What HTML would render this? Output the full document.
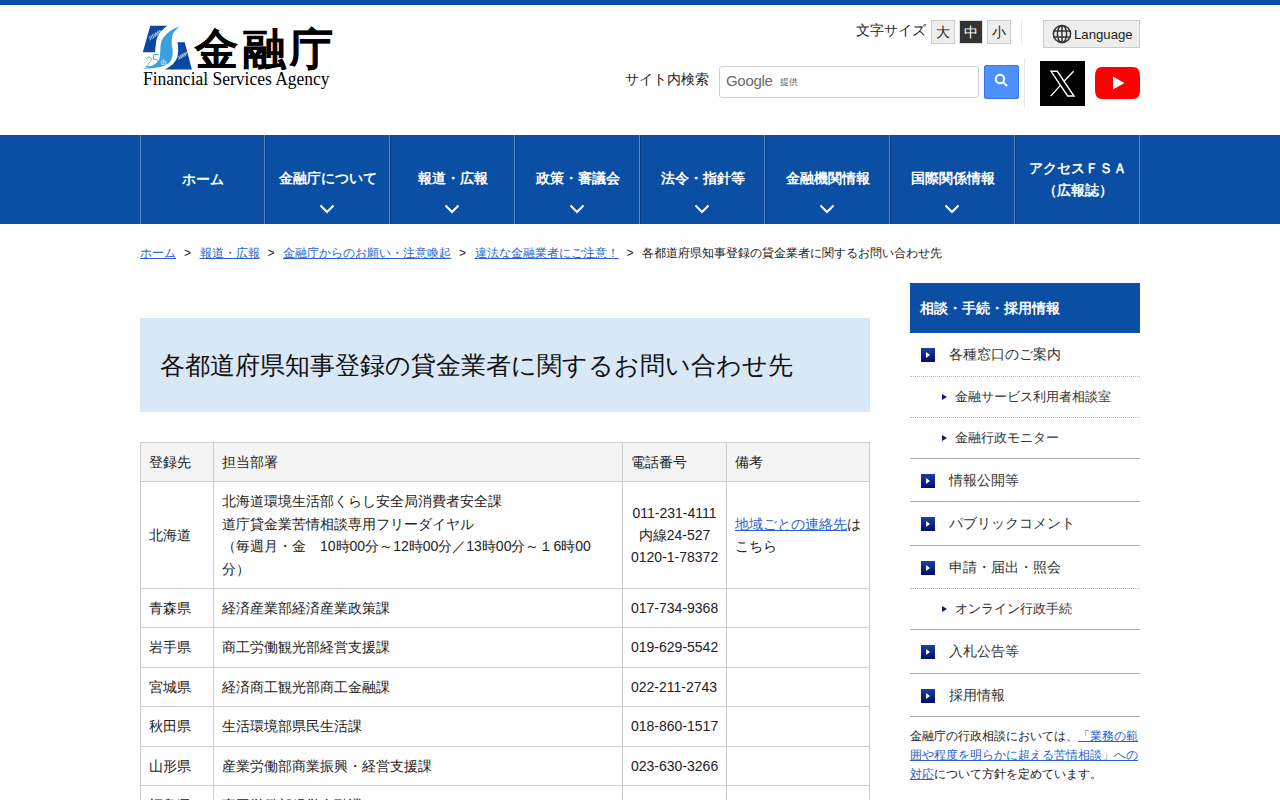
<!DOCTYPE html>
<html lang="ja">
<head>
<meta charset="utf-8">
<title>各都道府県知事登録の貸金業者に関するお問い合わせ先</title>
<style>
*{box-sizing:border-box;margin:0;padding:0}
html,body{width:1280px;height:800px;overflow:hidden;background:#fff}
body{font-family:"Liberation Sans",sans-serif;color:#222;font-size:14px;line-height:1.6;position:relative}
a{color:#2a5fd0}
.abs{position:absolute}
#topbar{position:absolute;left:0;top:0;width:1280px;height:5px;background:#0a4fa3;border-bottom:1px solid #00429c}
/* logo */
#logo{position:absolute;left:140px;top:20px;width:200px;height:75px}
#logo .jp{position:absolute;left:55px;top:8px;font-size:43px;font-weight:bold;color:#000;line-height:1;letter-spacing:4.5px;-webkit-text-stroke:0.35px #000}
#logo .en{position:absolute;left:3px;top:50px;font-family:"Liberation Serif",serif;font-size:18.5px;color:#000;line-height:1;white-space:nowrap;transform:scaleX(0.946);transform-origin:0 0}
/* font size */
#fs{position:absolute;left:856px;top:20px;height:23px}
#fs .lbl{position:absolute;left:0;top:0px;font-size:14px;white-space:nowrap;line-height:20px;color:#222}
.fsb{position:absolute;top:0;width:24px;height:24px;border:1px solid #ccc;background:#eee;font-size:14px;line-height:22px;text-align:center;color:#222}
.fsb.on{background:#333;color:#fff;border-color:#ddd}
#sep1{position:absolute;left:1021px;top:20px;width:1px;height:24px;background:#e6e6e6}
#lang{position:absolute;left:1043px;top:20px;width:97px;height:28px;border:1px solid #ccc;background:#eee;font-size:13px;color:#222}
#lang span{position:absolute;left:30px;top:6px;line-height:16px;font-size:13.2px}
#lang svg{position:absolute;left:8px;top:3px}
/* search */
#slabel{position:absolute;left:625px;top:69px;font-size:14px;line-height:20px;white-space:nowrap;color:#222}
#sinput{position:absolute;left:719px;top:66px;width:260px;height:32px;border:1px solid #d0d0d0;border-radius:3px;background:#fff}
#sinput .g{position:absolute;left:6px;top:4px;font-size:15px;color:#6b6b6b;line-height:20px;letter-spacing:-0.3px}
#sinput .t{position:absolute;left:60px;top:8px;font-size:9px;color:#555;line-height:14px}
#sbtn{position:absolute;left:984px;top:65px;width:35px;height:34px;background:#4d90fe;border:1px solid #3079ed;border-radius:2px}
#sep2{position:absolute;left:1024px;top:58px;width:1px;height:50px;background:#e6e6e6}
#xlogo{position:absolute;left:1040px;top:61px;width:45px;height:45px;background:#000}
#yt{position:absolute;left:1095px;top:67px;width:45px;height:32px}
/* nav */
#nav{position:absolute;left:0;top:135px;width:1280px;height:89px;background:#0a4fa3}
#nav ul{position:absolute;left:140px;top:0;width:1000px;height:89px;list-style:none}
#nav li{position:absolute;top:0;width:125px;height:89px;color:#fff;font-weight:bold;font-size:14px;text-align:center}
#nav .dl{position:absolute;top:0;width:1px;height:89px;background:#5b88c3}
#nav .dd{position:absolute;top:0;width:1px;height:89px;background:#063a80}
#nav li .t{position:absolute;left:0;right:0;top:32px;line-height:22px}
#nav li .t1{position:absolute;left:0;right:0;top:33px;line-height:22px}
#nav li .t2{position:absolute;left:0;right:0;top:22px;line-height:22px}
#nav li svg{position:absolute;left:54px;top:69px}
/* breadcrumb */
#bc{position:absolute;left:140px;top:243px;font-size:12px;line-height:20px;white-space:nowrap;color:#222}
#bc a{color:#2a5fd0}
#bc .gt{display:inline-block;margin:0 8.5px 0 8px}
/* title */
#title{position:absolute;left:140px;top:318px;width:730px;height:94px;background:#d9e8f6}
#title h1{position:absolute;left:20px;top:30px;font-size:25px;font-weight:normal;line-height:34px;color:#111;white-space:nowrap}
/* table */
#tbl{position:absolute;left:140px;top:442px;width:730px;border-collapse:collapse;table-layout:fixed;font-size:14px;line-height:22.4px}
#tbl th,#tbl td{border:1px solid #ccc;padding:8px 8px;text-align:left;vertical-align:middle;font-weight:normal}
#tbl th{background:#f4f4f4}
#tbl td.ph{white-space:nowrap;padding-left:8px;padding-right:0}
/* sidebar */
#side{position:absolute;left:910px;top:283px;width:230px}
#side .hd{height:50px;background:#0a4fa3;color:#fff;font-weight:bold;font-size:14px;padding-left:10px;line-height:50px}
#side .it{position:relative;border-bottom:1px solid #aaa;font-size:14px;line-height:22.4px;padding:10px 0 10px 39px;color:#333}
#side .it.dot{border-bottom:1px dotted #bbb}
#side .it i{position:absolute;left:11px;top:15px;width:14px;height:14px;background:linear-gradient(#1d3fa8,#000a6b)}
#side .it i:after{content:"";position:absolute;left:5px;top:4px;border-left:4px solid #fff;border-top:3px solid transparent;border-bottom:3px solid transparent}
#side .sub{position:relative;font-size:13px;line-height:20px;padding:10px 0 10px 45px;color:#333}
#side .tri{position:absolute;left:32px;top:17px;border-left:5px solid #0b1a78;border-top:3.5px solid transparent;border-bottom:3.5px solid transparent}
#side .sub i{position:absolute;left:32px;top:17px;border-left:5px solid #0b1a78;border-top:3.5px solid transparent;border-bottom:3.5px solid transparent}
#side .note{font-size:12px;line-height:19.2px;color:#222;padding-top:10px;letter-spacing:0}
</style>
</head>
<body>
<div id="topbar"></div>

<div id="logo">
  <svg class="abs" style="left:0;top:0" width="56" height="52" viewBox="0 0 56 52">
    <path d="M10.3,5.75 L27.5,5.75 C22,9 17.5,15 16.2,21 L15,32.3 L2.8,32.3 Z" fill="#0a47a0"/>
    <path d="M37.5,22.3 L44.7,22.3 L51.9,49.5 L25,49.5 C30,47 35,43 37,38 C38.5,34 38.5,28 37.5,22.3 Z" fill="#0a47a0"/>
    <path d="M40.6,6.4 C33,8 25,13 21.5,21 C19.5,27 21,33 19.5,39 C17,44 10,47.5 2.5,48.6 C12,49 24,47 29,43 C33,39 33,33 32.5,29 C31.5,24 31,19 33,13.5 C35,10 38,7.5 40.6,6.4 Z" fill="#3aa0e0"/>
    <clipPath id="c1"><path d="M8.5,17 L20.5,9 L22,12.5 L9.5,20.8 Z"/></clipPath>
    <clipPath id="c2"><path d="M37.5,36.5 L46.5,31.5 L47.8,34.8 L38.3,40 Z"/></clipPath>
    <g clip-path="url(#c1)" stroke="#dfe8f5" stroke-width="0.9">
      <line x1="7" y1="22" x2="12" y2="12"/><line x1="9" y1="22" x2="14" y2="12"/><line x1="11" y1="22" x2="16" y2="12"/><line x1="13" y1="21" x2="18" y2="11"/><line x1="15" y1="20" x2="20" y2="10"/><line x1="17" y1="19" x2="22" y2="9"/><line x1="19" y1="18" x2="24" y2="8"/>
    </g>
    <g clip-path="url(#c2)" stroke="#dfe8f5" stroke-width="0.9">
      <line x1="36" y1="41" x2="41" y2="31"/><line x1="38" y1="41" x2="43" y2="31"/><line x1="40" y1="40" x2="45" y2="30"/><line x1="42" y1="39" x2="47" y2="29"/><line x1="44" y1="38" x2="49" y2="28"/>
    </g>
    <g fill="none" stroke="#3a9ee0" stroke-width="0.9" stroke-linecap="round"><path d="M6.3,38.6 C7.5,36.8 10.8,36.6 11.3,38.8 C11.6,40.8 8.5,43.5 6,46.6 L12,46.6"/><path d="M18.6,34.6 L13.8,34.6 L13.2,39.4 C15.8,38.6 18.3,39.6 18.2,42.6 C18,45.6 15,47 11.5,46.8"/></g>
    <text x="20.4" y="44.8" font-family="Liberation Serif" font-size="7.5" fill="#eef2f6">th</text>
  </svg>
  <div class="jp">金融庁</div>
  <div class="en">Financial Services Agency</div>
</div>

<div id="fs">
  <div class="lbl">文字サイズ</div>
  <div class="fsb" style="left:75px">大</div>
  <div class="fsb on" style="left:103px">中</div>
  <div class="fsb" style="left:131px">小</div>
</div>
<div id="sep1"></div>
<div id="lang">
  <svg width="20" height="20" viewBox="0 0 20 20"><g fill="none" stroke="#333" stroke-width="1.5"><circle cx="10" cy="10" r="8.6"/><ellipse cx="10" cy="10" rx="4.6" ry="8.6"/><line x1="1.5" y1="7" x2="18.5" y2="7"/><line x1="1.5" y1="13" x2="18.5" y2="13"/><line x1="10" y1="1.5" x2="10" y2="18.5"/></g></svg>
  <span>Language</span>
</div>

<div id="slabel">サイト内検索</div>
<div id="sinput"><span class="g">Google</span><span class="t">提供</span></div>
<div id="sbtn"><svg width="33" height="32" viewBox="0 0 33 32"><circle cx="15" cy="13" r="4.2" fill="none" stroke="#fff" stroke-width="2"/><line x1="18" y1="16" x2="22" y2="20" stroke="#fff" stroke-width="2"/></svg></div>
<div id="sep2"></div>
<div id="xlogo"><svg width="45" height="45" viewBox="0 0 45 45"><g fill="none" stroke="#fff" stroke-width="1.4" stroke-linejoin="miter"><polygon points="11,10.3 17.3,10.3 34,35 27.7,35"/><line x1="33.6" y1="10.2" x2="24.2" y2="20"/><line x1="20.4" y1="24.4" x2="10.8" y2="35.1"/></g></svg></div>
<div id="yt"><svg width="45" height="32" viewBox="0 0 45 32"><path d="M8,0 H37 C43,0 45,3 45,10 V22 C45,29 43,32 37,32 H8 C2,32 0,29 0,22 V10 C0,3 2,0 8,0 Z" fill="#f00"/><polygon points="18,9.5 29.5,16 18,22.5" fill="#fff"/></svg></div>

<div id="nav"><div class="dl" style="left:140px"></div><div class="dl" style="left:264px"></div><div class="dd" style="left:265px"></div><div class="dl" style="left:389px"></div><div class="dd" style="left:390px"></div><div class="dl" style="left:514px"></div><div class="dd" style="left:515px"></div><div class="dl" style="left:639px"></div><div class="dd" style="left:640px"></div><div class="dl" style="left:764px"></div><div class="dd" style="left:765px"></div><div class="dl" style="left:889px"></div><div class="dd" style="left:890px"></div><div class="dl" style="left:1014px"></div><div class="dd" style="left:1015px"></div><div class="dl" style="left:1139px"></div><ul>
  <li style="left:0"><div class="t1">ホーム</div></li>
  <li style="left:125px"><div class="t">金融庁について</div><svg width="16" height="11" viewBox="0 0 16 11"><polyline points="1.5,1.5 8,8 14.5,1.5" fill="none" stroke="#fff" stroke-width="2"/></svg></li>
  <li style="left:250px"><div class="t">報道・広報</div><svg width="16" height="11" viewBox="0 0 16 11"><polyline points="1.5,1.5 8,8 14.5,1.5" fill="none" stroke="#fff" stroke-width="2"/></svg></li>
  <li style="left:375px"><div class="t">政策・審議会</div><svg width="16" height="11" viewBox="0 0 16 11"><polyline points="1.5,1.5 8,8 14.5,1.5" fill="none" stroke="#fff" stroke-width="2"/></svg></li>
  <li style="left:500px"><div class="t">法令・指針等</div><svg width="16" height="11" viewBox="0 0 16 11"><polyline points="1.5,1.5 8,8 14.5,1.5" fill="none" stroke="#fff" stroke-width="2"/></svg></li>
  <li style="left:625px"><div class="t">金融機関情報</div><svg width="16" height="11" viewBox="0 0 16 11"><polyline points="1.5,1.5 8,8 14.5,1.5" fill="none" stroke="#fff" stroke-width="2"/></svg></li>
  <li style="left:750px"><div class="t">国際関係情報</div><svg width="16" height="11" viewBox="0 0 16 11"><polyline points="1.5,1.5 8,8 14.5,1.5" fill="none" stroke="#fff" stroke-width="2"/></svg></li>
  <li class="last" style="left:875px"><div class="t2">アクセスＦＳＡ<br>（広報誌）</div></li>
</ul></div>

<div id="bc"><a href="#">ホーム</a><span class="gt">&gt;</span><a href="#">報道・広報</a><span class="gt">&gt;</span><a href="#">金融庁からのお願い・注意喚起</a><span class="gt">&gt;</span><a href="#">違法な金融業者にご注意！</a><span class="gt">&gt;</span>各都道府県知事登録の貸金業者に関するお問い合わせ先</div>

<div id="title"><h1>各都道府県知事登録の貸金業者に関するお問い合わせ先</h1></div>

<table id="tbl">
  <colgroup><col style="width:73px"><col style="width:409px"><col style="width:104px"><col style="width:143px"></colgroup>
  <tr><th>登録先</th><th>担当部署</th><th>電話番号</th><th>備考</th></tr>
  <tr><td>北海道</td><td>北海道環境生活部くらし安全局消費者安全課<br>道庁貸金業苦情相談専用フリーダイヤル<br>（毎週月・金　10時00分～12時00分／13時00分～１6時00分）</td><td class="ph" style="text-align:center;padding-right:8px;padding-left:8px">011-231-4111<br>内線24-527<br>0120-1-78372</td><td><a href="#">地域ごとの連絡先</a>はこちら</td></tr>
  <tr><td>青森県</td><td>経済産業部経済産業政策課</td><td class="ph">017-734-9368</td><td></td></tr>
  <tr><td>岩手県</td><td>商工労働観光部経営支援課</td><td class="ph">019-629-5542</td><td></td></tr>
  <tr><td>宮城県</td><td>経済商工観光部商工金融課</td><td class="ph">022-211-2743</td><td></td></tr>
  <tr><td>秋田県</td><td>生活環境部県民生活課</td><td class="ph">018-860-1517</td><td></td></tr>
  <tr><td>山形県</td><td>産業労働部商業振興・経営支援課</td><td class="ph">023-630-3266</td><td></td></tr>
  <tr><td>福島県</td><td>商工労働部経営金融課</td><td class="ph">024-521-7288</td><td></td></tr>
</table>

<div id="side">
  <div class="hd">相談・手続・採用情報</div>
  <div class="it dot" style="height:44px"><i></i>各種窓口のご案内</div>
  <div class="sub" style="height:41px;border-bottom:1px dotted #bbb"><i></i>金融サービス利用者相談室</div>
  <div class="sub it" style="height:41px;padding-left:45px"><b class="tri"></b>金融行政モニター</div>
  <div class="it" style="height:43px"><i></i>情報公開等</div>
  <div class="it" style="height:44px"><i></i>パブリックコメント</div>
  <div class="it dot" style="height:43px"><i></i>申請・届出・照会</div>
  <div class="sub it" style="height:41px;padding-left:45px"><b class="tri"></b>オンライン行政手続</div>
  <div class="it" style="height:44px"><i></i>入札公告等</div>
  <div class="it" style="height:43px"><i></i>採用情報</div>
  <div class="note">金融庁の行政相談においては、<a href="#">「業務の範囲や程度を明らかに超える苦情相談」への対応</a>について方針を定めています。</div>
</div>

</body>
</html>
